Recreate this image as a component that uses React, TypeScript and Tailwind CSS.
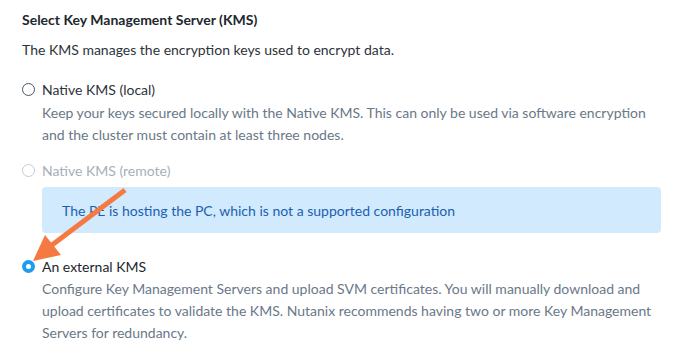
import React from "react";

function Radio({ checked, disabled }: { checked?: boolean; disabled?: boolean }) {
  if (checked) {
    return (
      <span className="mt-[3px] flex h-[13px] w-[13px] shrink-0 items-center justify-center rounded-full bg-[#1b9df0]">
        <span className="h-[5px] w-[5px] rounded-full bg-white" />
      </span>
    );
  }
  return (
    <span
      className={
        "mt-[3px] h-[13px] w-[13px] shrink-0 rounded-full border " +
        (disabled ? "border-[#c5cbd2]" : "border-[#4a5563]")
      }
    />
  );
}

export default function App() {
  return (
    <div
      className="relative h-[362px] w-[683px] overflow-hidden bg-white pl-[22px] pr-[22px] pt-[10px] text-[14px]"
      style={{ fontFamily: "Lato, 'Open Sans', sans-serif" }}
    >
      <div className="text-[14px] font-bold leading-[20px] text-[#22272e]">
        Select Key Management Server (KMS)
      </div>
      <div className="mt-[10px] leading-[20px] text-[#2d333b]">
        The KMS manages the encryption keys used to encrypt data.
      </div>

      <div className="mt-[20px] flex gap-[7px]">
        <Radio />
        <div className="flex flex-col">
          <div className="leading-[20px] text-[#2d333b]">Native KMS (local)</div>
          <div className="mt-[2px] leading-[22px] text-[#6a7888]">
            Keep your keys secured locally with the Native KMS. This can only be used via software encryption and the cluster must contain at least three nodes.
          </div>
        </div>
      </div>

      <div className="mt-[15px] flex gap-[7px]">
        <Radio disabled />
        <div className="flex flex-1 flex-col">
          <div className="leading-[20px] text-[#a6afba]">Native KMS (remote)</div>
          <div className="mt-[6px] flex h-[46px] items-center rounded-[4px] bg-[#d1eafd] pl-[20px] text-[#1c5fb1]">
            The PE is hosting the PC, which is not a supported configuration
          </div>
        </div>
      </div>

      <div className="mt-[24px] flex gap-[7px]">
        <Radio checked />
        <div className="flex flex-col">
          <div className="leading-[20px] text-[#22272e]">An external KMS</div>
          <div className="mt-[1px] leading-[22px] text-[#6a7888]">
            Configure Key Management Servers and upload SVM certificates. You will manually download and upload certificates to validate the KMS. Nutanix recommends having two or more Key Management Servers for redundancy.
          </div>
        </div>
      </div>

      <svg className="pointer-events-none absolute left-0 top-0" width="683" height="362">
        <line x1="125" y1="190" x2="48" y2="248" stroke="#f47a42" strokeWidth="5" />
        <polygon points="33,261 45,235 61,255" fill="#f47a42" />
      </svg>
    </div>
  );
}
